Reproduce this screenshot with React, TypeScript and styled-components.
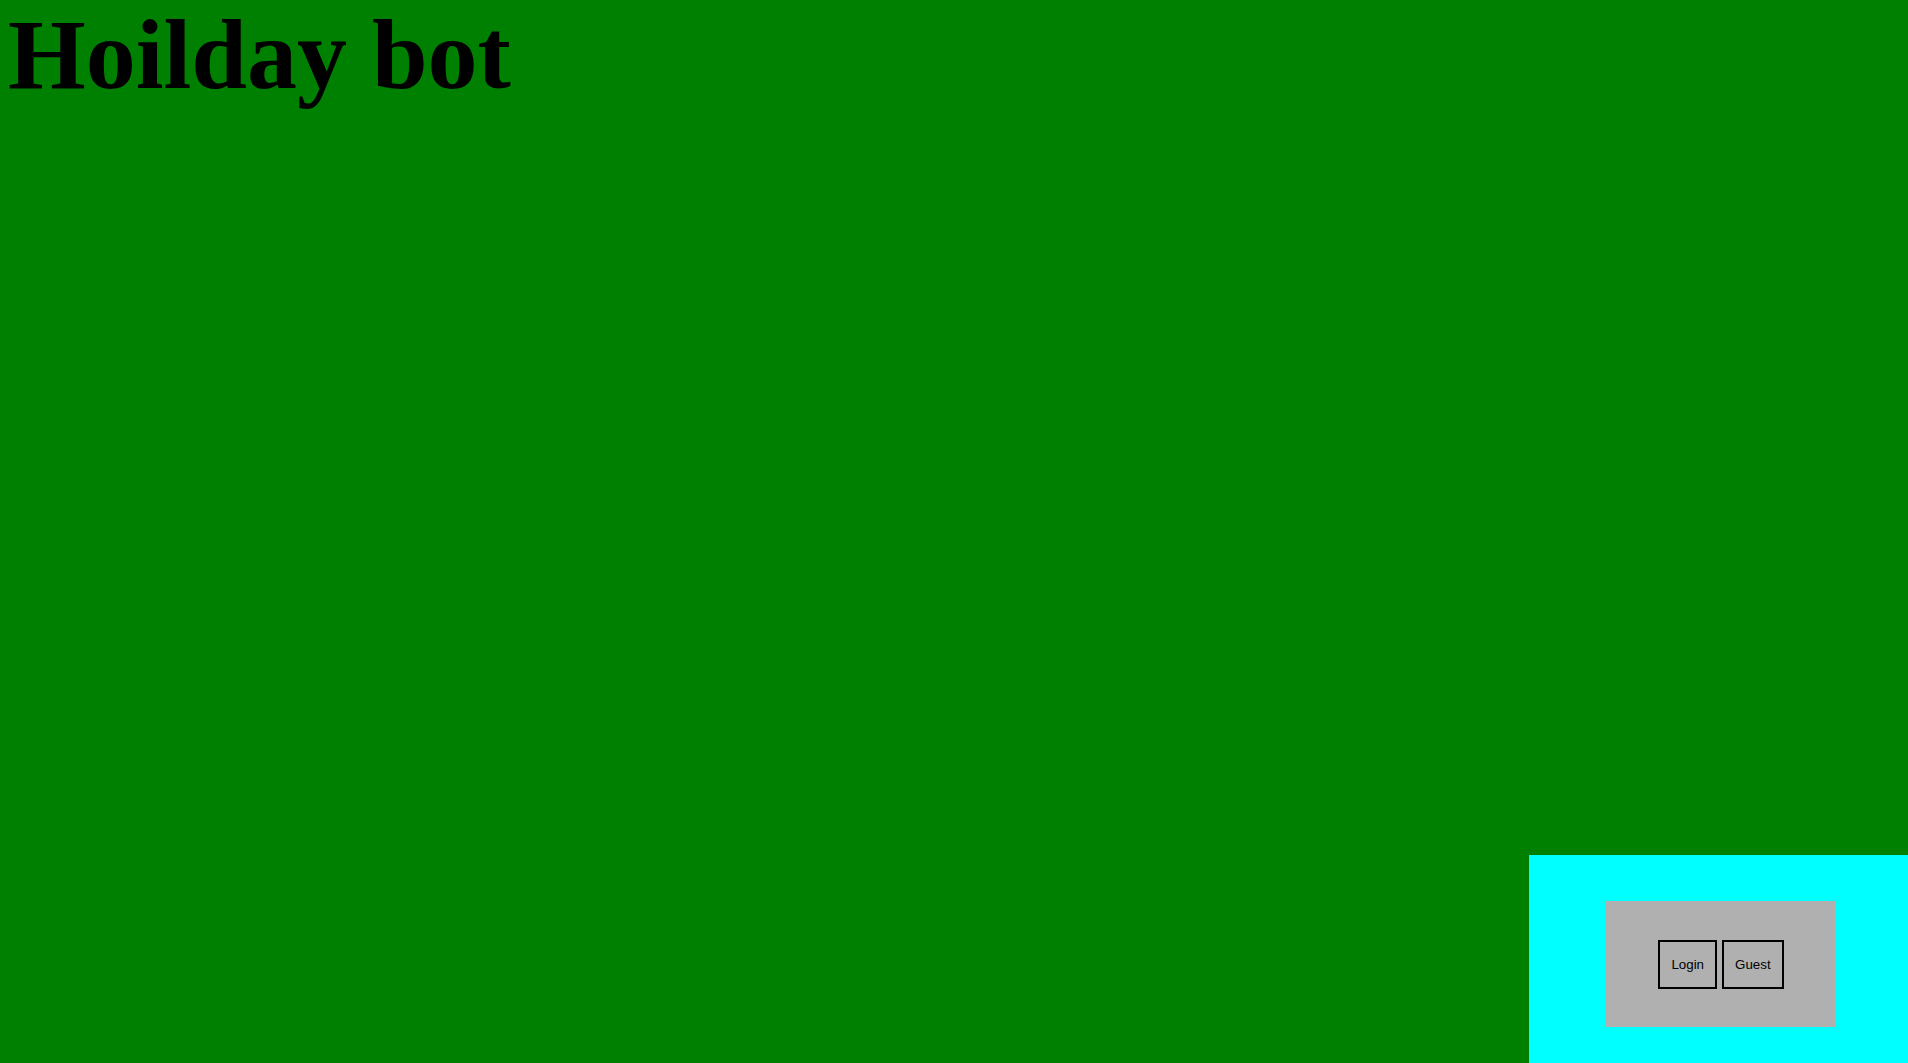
import React from "react";
import styled, { createGlobalStyle } from "styled-components";

const GlobalStyle = createGlobalStyle`
  html, body {
    margin: 0;
    padding: 0;
    background: #008000;
  }
  #root {
    height: 100vh;
  }
`;

const Page = styled.div`
  height: 100vh;
  display: flex;
  flex-direction: column;
  justify-content: space-between;
  background: #008000;
  overflow: hidden;
`;

const Title = styled.h1`
  margin: 0;
  padding: 0 0 0 8px;
  font-family: "Liberation Serif", "Times New Roman", serif;
  font-weight: bold;
  font-size: 100px;
  line-height: 110px;
  color: #000;
`;

const Footer = styled.div`
  display: flex;
  justify-content: flex-end;
`;

const Dock = styled.div`
  width: 379px;
  height: 208px;
  box-sizing: border-box;
  padding: 46px 72px 36px 77px;
  background: #00ffff;
`;

const Card = styled.div`
  width: 230px;
  height: 126px;
  display: flex;
  align-items: center;
  justify-content: center;
  gap: 5px;
  background: #b0b0b0;
`;

const Button = styled.button`
  box-sizing: border-box;
  height: 49px;
  padding: 0 11px;
  border: 2px solid #000;
  background: transparent;
  font-family: "Liberation Sans", Arial, sans-serif;
  font-size: 13.333px;
  color: #000;
  cursor: pointer;
`;

export default function App() {
  return (
    <>
      <GlobalStyle />
      <Page>
        <Title>Hoilday bot</Title>
        <Footer>
          <Dock>
            <Card>
              <Button>Login</Button>
              <Button>Guest</Button>
            </Card>
          </Dock>
        </Footer>
      </Page>
    </>
  );
}
